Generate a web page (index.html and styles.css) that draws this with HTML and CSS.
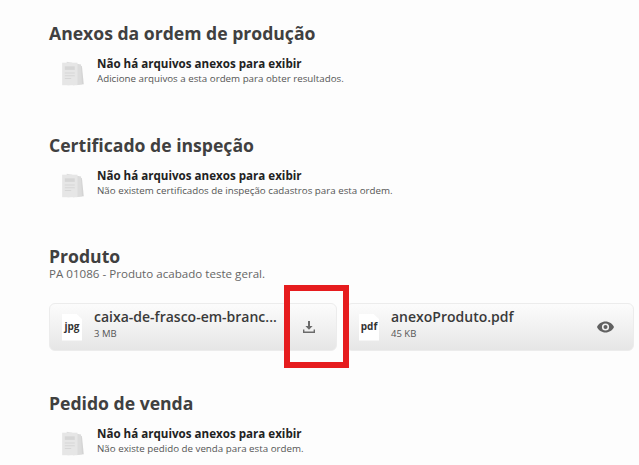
FILE: index.html
```html
<!DOCTYPE html>
<html lang="pt-BR">
<head>
<meta charset="utf-8">
<title>Anexos</title>
<link rel="stylesheet" href="styles.css">
</head>
<body>
<svg class="defs" width="0" height="0" aria-hidden="true">
  <defs>
    <g id="docs">
      <path d="M12 3 L24 7 L26 27 L14 28 Z" fill="#d4d4d4"/>
      <path d="M7 2 L23 5 L24 27 L8 28 Z" fill="#dcdcdc"/>
      <path d="M2 3 H19 V28 H2 Z" fill="#e6e6e6"/>
      <path d="M5 7 H16 V11 H5 Z" fill="#d6d6d6"/>
      <path d="M5 14 H16 V15 H5 Z M5 17 H16 V18 H5 Z M5 20 H12 V21 H5 Z" fill="#d6d6d6"/>
    </g>
  </defs>
</svg>
<main class="page">
  <section class="section first">
    <h2 class="title">Anexos da ordem de produção</h2>
    <div class="empty">
      <svg class="docs" width="25" height="27" viewBox="0 0 27 30"><use href="#docs"/></svg>
      <div class="empty-body">
        <p class="empty-title">Não há arquivos anexos para exibir</p>
        <p class="empty-text">Adicione arquivos a esta ordem para obter resultados.</p>
      </div>
    </div>
  </section>
  <section class="section cert">
    <h2 class="title">Certificado de inspeção</h2>
    <div class="empty">
      <svg class="docs" width="25" height="27" viewBox="0 0 27 30"><use href="#docs"/></svg>
      <div class="empty-body">
        <p class="empty-title">Não há arquivos anexos para exibir</p>
        <p class="empty-text">Não existem certificados de inspeção cadastros para esta ordem.</p>
      </div>
    </div>
  </section>
  <section class="section product">
    <h2 class="title">Produto</h2>
    <p class="subtitle">PA 01086 - Produto acabado teste geral.</p>
    <div class="cards">
      <div class="card">
        <span class="file-type">jpg</span>
        <div class="file-info">
          <p class="file-name">caixa-de-frasco-em-branc...</p>
          <p class="file-size">3 MB</p>
        </div>
        <svg class="action" width="16" height="16" viewBox="0 0 16 16">
          <path d="M7 2 H9 V7 H11.6 L8 10.8 L4.4 7 H7 Z" fill="#6b6b6b"/>
          <path d="M2 10.5 H3.4 V12.6 H12.6 V10.5 H14 V14 H2 Z" fill="#6b6b6b"/>
        </svg>
      </div>
      <div class="card">
        <span class="file-type">pdf</span>
        <div class="file-info">
          <p class="file-name">anexoProduto.pdf</p>
          <p class="file-size">45 KB</p>
        </div>
        <svg class="action eye" width="17" height="12" viewBox="0 0 17 12">
          <path fill-rule="evenodd" d="M8.5 .5 C12.3 .5 15.5 2.8 17 6 C15.5 9.2 12.3 11.5 8.5 11.5 C4.7 11.5 1.5 9.2 0 6 C1.5 2.8 4.7 .5 8.5 .5 Z M8.5 2.4 A3.6 3.6 0 1 0 8.5 9.6 A3.6 3.6 0 1 0 8.5 2.4 Z M8.5 4 A2 2 0 1 1 8.5 8 A2 2 0 1 1 8.5 4 Z" fill="#616161"/>
        </svg>
      </div>
    </div>
    <div class="highlight"></div>
  </section>
  <section class="section order">
    <h2 class="title">Pedido de venda</h2>
    <div class="empty">
      <svg class="docs" width="25" height="27" viewBox="0 0 27 30"><use href="#docs"/></svg>
      <div class="empty-body">
        <p class="empty-title">Não há arquivos anexos para exibir</p>
        <p class="empty-text">Não existe pedido de venda para esta ordem.</p>
      </div>
    </div>
  </section>
</main>
</body>
</html>
```
FILE: styles.css
```css
* { box-sizing: border-box; }
html, body { margin: 0; padding: 0; height: 100%; overflow: hidden; }
body { background: #fdfdfd; font-family: "Open Sans", "Liberation Sans", sans-serif; color: #3c3c3c; }
.defs { display: block; height: 0; }
p, h2 { margin: 0; }
.page { padding: 20px 5px 0 49px; }
.title { font-size: 17.6px; line-height: 26px; font-weight: 700; color: #404040; }
.section { position: relative; }
.cert { margin-top: 45px; }
.product { margin-top: 44px; }
.order { margin-top: 39px; }
.empty { display: flex; align-items: flex-start; gap: 12px; margin: 7px 0 0 11px; }
.docs { flex: none; margin-top: 7px; }
.empty-body { padding-top: 4px; }
.empty-title { font-size: 11.6px; line-height: 14px; font-weight: 700; color: #222; }
.empty-text { font-size: 9.75px; line-height: 14px; margin-top: 1px; color: #555; }
.subtitle { font-size: 11.6px; line-height: 14px; color: #666; margin-top: -2px; }
.cards { display: flex; gap: 9px; margin-top: 22px; }
.card { flex: 1; height: 48px; display: flex; align-items: center; padding: 0 19px 0 12px; border: 1px solid #ececec; border-radius: 6px; background: linear-gradient(#fcfcfc, #e6e6e6); }
.file-type { flex: none; width: 20px; height: 27px; background: #fff; font-size: 10px; font-weight: 700; line-height: 25px; text-align: center; color: #333; clip-path: polygon(0 0, 70% 0, 100% 20%, 100% 100%, 0 100%); }
.file-info { flex: 1; margin-left: 12px; min-width: 0; padding-bottom: 8px; }
.file-name { font-size: 14px; line-height: 20px; font-weight: 600; color: #3a3a3a; white-space: nowrap; }
.file-size { font-size: 9.5px; line-height: 13px; color: #555; }
.action { flex: none; }
.highlight { position: absolute; left: 235px; top: 42px; width: 65px; height: 83px; border: 6px solid #e61c1e; }
```
